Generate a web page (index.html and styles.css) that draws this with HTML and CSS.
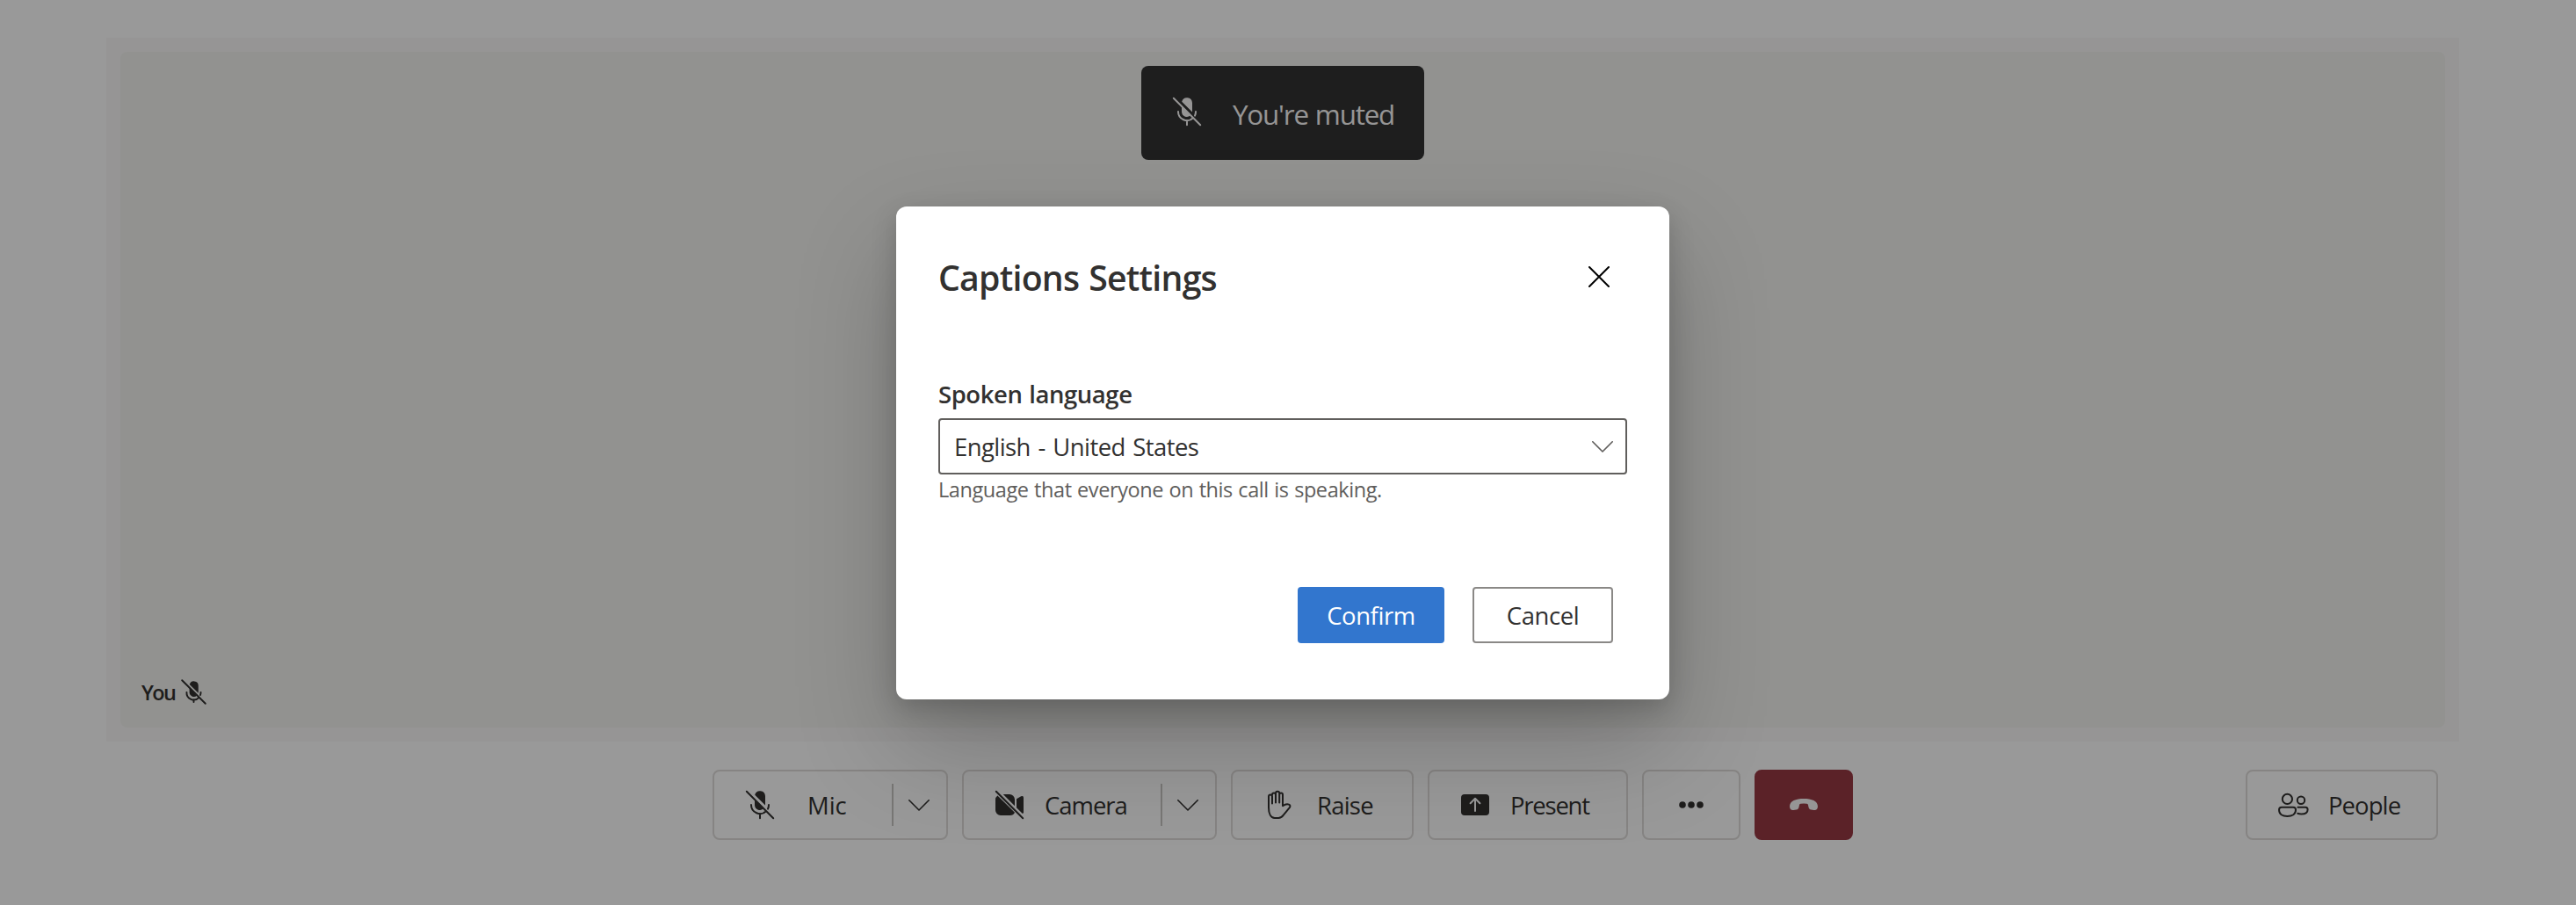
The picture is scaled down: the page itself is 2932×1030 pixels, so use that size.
FILE: index.html
```html
<!DOCTYPE html>
<html lang="en">
<head>
<meta charset="utf-8">
<title>Call</title>
<link rel="stylesheet" href="styles.css">
</head>
<body>
<svg class="sprite" aria-hidden="true">
  <symbol id="mic-off" viewBox="0 0 20 20">
    <path d="M7.1 4.4A3 3 0 0 1 13 5v5.300z" fill="currentColor"/>
    <path d="M7 7v3a3 3 0 0 0 4.900 2.300z" fill="currentColor"/>
    <path d="M5 10a5 5 0 0 0 8.500 3.600M10 15v2.600M15 10q0 1.200-.5 2.300M2.400 2.400l15.200 15.200" fill="none" stroke="currentColor" stroke-width="1" stroke-linecap="round"/>
  </symbol>
  <symbol id="mic-off-small" viewBox="0 0 20 20">
    <path d="M7.300 5.200A2.900 2.900 0 0 1 13 6v4.700z" fill="currentColor"/>
    <path d="M7.200 7.200v3a2.900 2.900 0 0 0 4.800 2.200z" fill="currentColor"/>
    <path d="M5.400 10.200a4.600 4.600 0 0 0 8 3.400M10 15v1.600M14.600 10.200q0 1-.3 1.800M2.400 2.400l15.200 15.200" fill="none" stroke="currentColor" stroke-width="1.1" stroke-linecap="round"/>
  </symbol>
  <symbol id="camera-off" viewBox="0 0 20 20">
    <path d="M5 4h5a3 3 0 0 1 3 3v3.600L6.400 4z" fill="currentColor"/>
    <path d="M3.200 4.700L13 14.400A3 3 0 0 1 10.300 16H5a3 3 0 0 1-3-3V7q0-1.400 1.200-2.300z" fill="currentColor"/>
    <path d="M14 6.600l2.600-1.500q1.400-.5 1.400.8v8.300q0 .6-.6.8L14 11.600z" fill="currentColor"/>
    <path d="M2.400 2.400l15.200 15.200" stroke="currentColor" stroke-linecap="round"/>
  </symbol>
  <symbol id="hand" viewBox="0 0 20 20">
    <path d="M6.500 9.300V5.200a1 1 0 0 0-2 0v6.300c0 3.500 1.200 6 3.400 6h2.200c1.200 0 2-.6 2.800-1.700l3.500-4.200c.6-.8.3-1.500-.4-1.800-1.200-.5-2.400 0-3.500.8V4.200a.95.95 0 0 0-1.900 0v4.500V3.400a1.050 1 0 0 0-2.100 0v5.300V4.200a1 1 0 0 0-2 0" fill="none" stroke="currentColor" stroke-linecap="round" stroke-linejoin="round"/>
  </symbol>
  <symbol id="share" viewBox="0 0 20 20">
    <rect x="2" y="4" width="16" height="12" rx="2" fill="currentColor"/>
    <path d="M10 13.500V6.600M7.300 9.100L10 6.400l2.700 2.700" class="share-arrow" fill="none" stroke-linecap="round" stroke-linejoin="round"/>
  </symbol>
  <symbol id="more" viewBox="0 0 20 20">
    <g fill="currentColor"><circle cx="5" cy="10" r="1.900"/><circle cx="10" cy="10" r="1.900"/><circle cx="15" cy="10" r="1.900"/></g>
  </symbol>
  <symbol id="hang-up" viewBox="0 0 20 20">
    <path d="M10 6.500c4.500 0 8 1.300 8 4.400 0 1.500-.9 2.300-2.200 2.100l-1.600-.2c-.9-.2-1.300-.8-1.500-1.700l-.2-1c-.1-.4-.3-.6-.7-.7a8 8 0 0 0-3.600 0c-.4.1-.6.3-.7.7l-.2 1c-.2.9-.6 1.500-1.500 1.700l-1.600.2C2.900 13.200 2 12.400 2 10.900c0-3.100 3.500-4.400 8-4.400z" fill="currentColor"/>
  </symbol>
  <symbol id="people" viewBox="0 0 20 20">
    <g fill="none" stroke="currentColor"><circle cx="6.700" cy="6.700" r="2.800"/><circle cx="14.500" cy="7.400" r="2.100"/>
    <path d="M3.500 11.400h6.500q1.500 0 1.500 1.500c0 2.300-2 3.600-4.800 3.600S2 15.200 2 12.900q0-1.500 1.500-1.500z"/>
    <path d="M12.700 11.400h4.300q1.300 0 1.300 1.300c0 1.800-1.500 2.500-3.600 2.500q-1.200 0-2.100-.3" stroke-linecap="round"/></g>
  </symbol>
  <symbol id="chevron" viewBox="0 0 24 13">
    <path d="M.8.8L12 12 23.200.8" fill="none" stroke="currentColor" stroke-linecap="round" stroke-linejoin="round"/>
  </symbol>
  <symbol id="close" viewBox="0 0 24 24">
    <path d="M1 1l22 22M23 1L1 23" fill="none" stroke="currentColor" stroke-width="2" stroke-linecap="round"/>
  </symbol>
</svg>

<main class="call">
  <section class="stage">
    <div class="tile">
      <div class="toast"><svg class="icon"><use href="#mic-off"/></svg><span>You're muted</span></div>
      <div class="name"><span>You</span><svg class="icon-small"><use href="#mic-off-small"/></svg></div>
    </div>
  </section>
  <nav class="controls">
    <div class="main-controls">
      <button class="btn mic"><svg class="icon"><use href="#mic-off"/></svg><span>Mic</span><i class="divider"></i><svg class="chevron"><use href="#chevron"/></svg></button>
      <button class="btn camera"><svg class="icon"><use href="#camera-off"/></svg><span>Camera</span><i class="divider"></i><svg class="chevron"><use href="#chevron"/></svg></button>
      <button class="btn raise"><svg class="icon"><use href="#hand"/></svg><span>Raise</span></button>
      <button class="btn present"><svg class="icon"><use href="#share"/></svg><span>Present</span></button>
      <button class="btn icon-only"><svg class="icon"><use href="#more"/></svg></button>
      <button class="btn icon-only end"><svg class="icon"><use href="#hang-up"/></svg></button>
    </div>
    <button class="btn people"><svg class="icon"><use href="#people"/></svg><span>People</span></button>
  </nav>
</main>

<div class="overlay">
  <div class="dialog" role="dialog">
    <header class="dialog-header"><h1>Captions Settings</h1><svg class="close"><use href="#close"/></svg></header>
    <div class="field">
      <label>Spoken language</label>
      <div class="select"><span>English - United States</span><svg class="chevron"><use href="#chevron"/></svg></div>
      <p class="help">Language that everyone on this call is speaking.</p>
    </div>
    <footer class="dialog-actions"><button class="primary">Confirm</button><button class="secondary">Cancel</button></footer>
  </div>
</div>
</body>
</html>
```
FILE: styles.css
```css
* { box-sizing: border-box; }
body {
  margin: 0;
  height: 1030px;
  overflow: hidden;
  position: relative;
  background: #fff;
  color: #323130;
  font-family: "Open Sans", "Noto Sans", sans-serif;
  font-size: 27.44px;
}
button { font: inherit; color: inherit; padding: 0; margin: 0; }
svg { display: block; flex: none; }
span, h1, label, p { white-space: nowrap; }
.sprite { position: absolute; width: 0; height: 0; }
.icon { width: 40px; height: 40px; }
.icon-small { width: 35px; height: 35px; }
.chevron { width: 24px; height: 13px; stroke-width: 1.6; }
.share-arrow { stroke: #fff; }

.call { width: 2920px; padding: 43px 121px 0; }
.stage { height: 801px; padding: 16px; background: #faf9f8; }
.tile {
  height: 100%;
  display: flex;
  flex-direction: column;
  justify-content: space-between;
  background: #f3f3f0;
  border-radius: 8px;
}
.toast {
  align-self: center;
  display: flex;
  width: 322px;
  height: 107px;
  margin-top: 16px;
  padding: 32px 0 0 32px;
  gap: 32px;
  border-radius: 8px;
  background: #323232;
  color: #faf9f8;
  font-size: 31.4px;
  line-height: 46px;
  letter-spacing: -1.2px;
  word-spacing: 1px;
}
.name {
  display: flex;
  align-items: center;
  height: 36px;
  margin: 0 0 23px 24px;
  font-size: 23.5px;
  font-weight: 600;
  letter-spacing: -1.6px;
  gap: 4px;
}
.name span { padding-top: 2px; }

.controls {
  display: grid;
  grid-template-columns: 1fr auto 1fr;
  padding: 32px 24px 0;
}
.main-controls { grid-column: 2; display: flex; gap: 16px; }
.btn {
  display: flex;
  align-items: center;
  height: 80px;
  padding-left: 32px;
  border: 2px solid #dfdddb;
  border-radius: 8px;
  background: transparent;
  gap: 20px;
}
.btn span { padding-top: 1px; }
.mic { width: 268px; gap: 34px; }
.camera { width: 290px; letter-spacing: -1px; }
.raise { width: 208px; gap: 24px; letter-spacing: -.75px; }
.present { width: 228px; letter-spacing: -1.2px; }
.people { width: 219px; justify-self: end; letter-spacing: -.9px; }
.icon-only { width: 112px; padding: 0; justify-content: center; }
.end { background: #983944; border-color: #983944; color: #faf9f8; }
.divider { width: 2px; height: 48px; margin-left: auto; background: #c8c6c4; }
.btn .chevron { margin: 0 19px 0 -3px; }
.mic .chevron { margin-left: -17px; }

.overlay {
  position: absolute;
  inset: 0;
  padding: 235px 0 0 1020px;
  background: rgba(0, 0, 0, .4);
}
.dialog {
  width: 880px;
  height: 561px;
  padding: 48px;
  border-radius: 12px;
  background: #fff;
  box-shadow: 0 51px 115px rgba(0, 0, 0, .22), 0 10px 29px rgba(0, 0, 0, .18);
}
.dialog-header { display: flex; justify-content: space-between; align-items: center; height: 64px; }
h1 { margin: 0; padding-top: 1px; font-size: 39.2px; font-weight: 600; letter-spacing: -.75px; word-spacing: 1.5px; }
.close { width: 24px; height: 24px; margin-right: 20px; color: #000; }
.field { margin-top: 81px; }
label { display: block; height: 48px; line-height: 42px; font-weight: 600; letter-spacing: -.4px; word-spacing: 1px; }
.select {
  display: flex;
  align-items: center;
  justify-content: space-between;
  height: 64px;
  padding: 0 14px 0 16px;
  border: 2px solid #605e5c;
  border-radius: 4px;
  letter-spacing: -.55px;
  word-spacing: 2px;
}
.select .chevron { color: #605e5c; }
.help { margin: 1px 0 0; font-size: 23.5px; line-height: 32px; letter-spacing: -.42px; word-spacing: .8px; color: #605e5c; }
.dialog-actions { display: flex; justify-content: flex-end; gap: 32px; margin: 95px 16px 0 0; }
.primary, .secondary { height: 64px; border-radius: 4px; letter-spacing: -.4px; }
.primary { width: 167px; border: 0; background: #3276ce; color: #fff; }
.secondary { width: 160px; border: 2px solid #8a8886; background: #fff; }
```
